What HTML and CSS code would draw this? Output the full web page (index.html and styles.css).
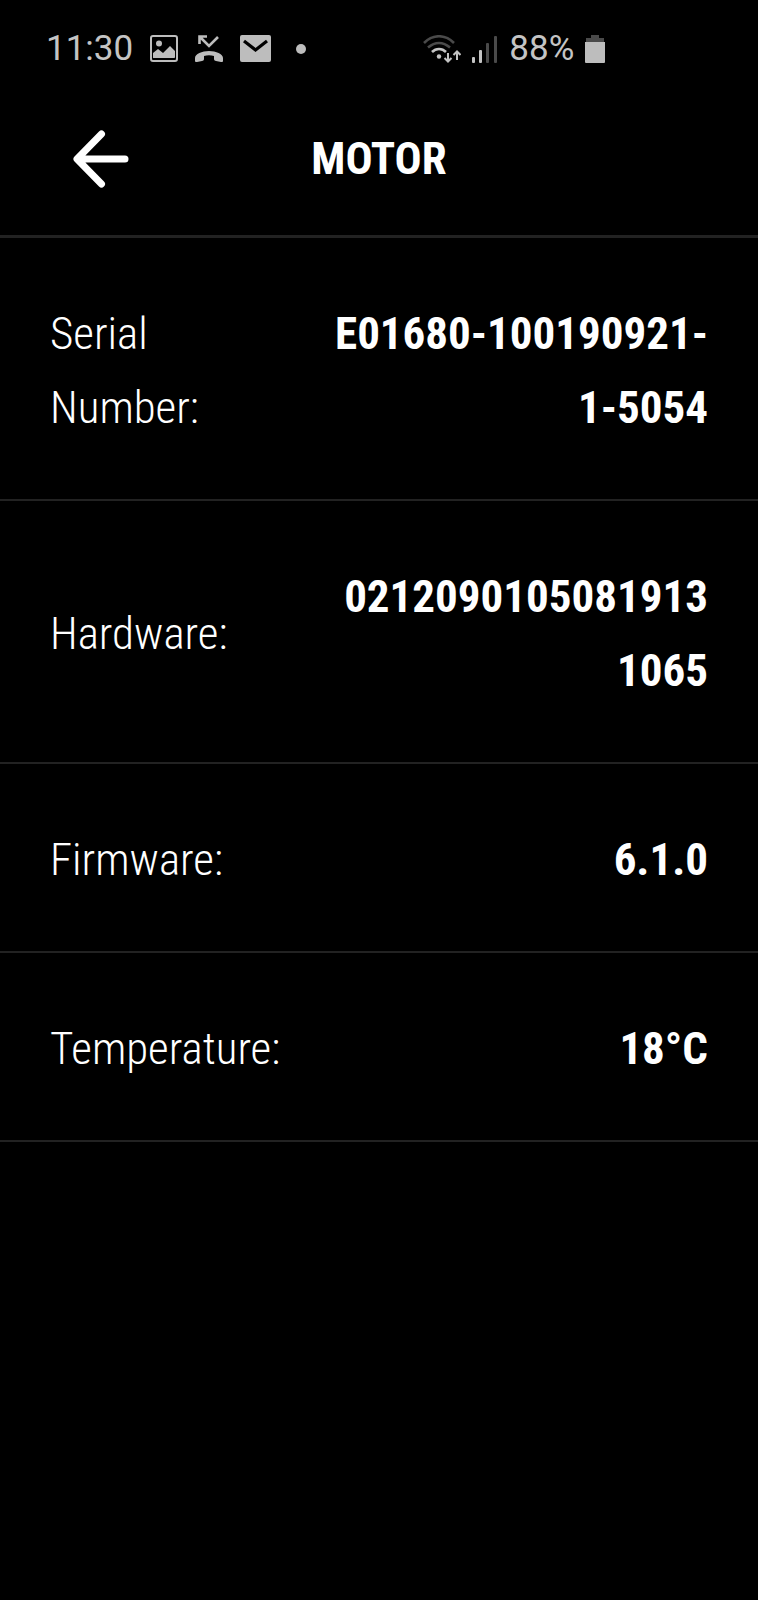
FILE: index.html
```
<!DOCTYPE html>
<html lang="en">
<head>
  <meta charset="UTF-8">
  <meta name="viewport" content="width=device-width, initial-scale=1.0">
  <title>Motor</title>
  <link rel="stylesheet" href="styles.css">
</head>
<body>
  <div class="status-bar">
    <div class="status-left">
      <time class="clock">11:30</time>
      <!-- picture -->
      <svg class="icon" width="28" height="28" viewBox="0 0 28 28">
        <rect x="1" y="1" width="26" height="25" rx="2" fill="none" stroke="#bdbdbd" stroke-width="2"/>
        <circle cx="9" cy="8.500" r="3" fill="#bdbdbd"/>
        <path d="M3 22v-4l5-4 5 4 7-7 5 5v6c0 1-1 1-1 1H4c-1 0-1 0-1-1z" fill="#bdbdbd"/>
      </svg>
      <!-- missed call -->
      <svg class="icon" width="28" height="28" viewBox="0 0 28 28">
        <path d="M4.500 9V1.500H12M5 2l9 9 9-9" fill="none" stroke="#bdbdbd" stroke-width="2.600"/>
        <path d="M0 26v-3c0-4 7-7 14-7s14 3 14 7v3c0 1-1 1-2 1l-5-1c-1 0-2-1-2-2v-3c-3-1-7-1-10 0v3c0 1-1 2-2 2l-5 1c-1 0-2 0-2-1z" fill="#bdbdbd"/>
      </svg>
      <!-- mail -->
      <svg class="icon" width="31" height="28" viewBox="0 0 31 28">
        <rect width="31" height="27" rx="2" fill="#bdbdbd"/>
        <path d="M4 6l11.500 9L27 6" fill="none" stroke="#000" stroke-width="3.200"/>
      </svg>
      <span class="dot"></span>
    </div>
    <div class="status-right">
      <!-- wifi -->
      <svg class="icon" width="38" height="28" viewBox="0 0 38 28">
        <g fill="none" stroke-width="2.600">
          <path d="M1 8C10-1 22-1 31 8" stroke="#4a4a4a"/>
          <path d="M5 12.500c7-6 15-6 22 0" stroke="#4a4a4a"/>
          <path d="M9 17c4-4 10-4 14 0" stroke="#c4c4c4"/>
          <path d="M25 18v8M21.500 23l3.500 3.500 3.500-3.500M34 25v-8M30.500 20l3.500-3.500 3.500 3.500" stroke="#c4c4c4" stroke-width="2"/>
        </g>
        <circle cx="16" cy="21.500" r="2.200" fill="#c4c4c4"/>
      </svg>
      <!-- signal -->
      <svg class="icon" width="26" height="28" viewBox="0 0 26 28">
        <g fill="#c4c4c4">
          <rect x="0" y="22" width="3" height="6" rx="1"/>
          <rect x="7" y="15" width="3" height="13" rx="1"/>
        </g>
        <g fill="#4a4a4a">
          <rect x="14" y="8" width="3" height="20" rx="1"/>
          <rect x="22" y="1" width="3" height="27" rx="1"/>
        </g>
      </svg>
      <span class="percent">88%</span>
      <!-- battery -->
      <svg class="icon" width="20" height="28" viewBox="0 0 20 28">
        <path d="M1 8V3h5V0h8v3h5v5z" fill="#4a4a4a"/>
        <path d="M0 7h20v20a1 1 0 0 1-1 1H1a1 1 0 0 1-1-1z" fill="#bdbdbd"/>
      </svg>
    </div>
  </div>

  <header class="header">
    <button class="back-btn" type="button" aria-label="Back">
      <svg width="56" height="58" viewBox="0 0 56 58">
        <path d="M28.500 4L4 29l24.500 25M5 29h47" fill="none" stroke="#fff" stroke-width="7" stroke-linecap="round" stroke-linejoin="round"/>
      </svg>
    </button>
    <h1 class="title">MOTOR</h1>
  </header>

  <dl class="info-list">
    <div class="info-row">
      <dt class="info-label">Serial Number:</dt>
      <dd class="info-value">E01680-100190921-1-5054</dd>
    </div>
    <div class="info-row">
      <dt class="info-label">Hardware:</dt>
      <dd class="info-value">02120901050819131065</dd>
    </div>
    <div class="info-row">
      <dt class="info-label">Firmware:</dt>
      <dd class="info-value">6.1.0</dd>
    </div>
    <div class="info-row">
      <dt class="info-label">Temperature:</dt>
      <dd class="info-value">18°C</dd>
    </div>
  </dl>
</body>
</html>
```
FILE: styles.css
```
* {
  box-sizing: border-box;
}
body {
  margin: 0;
  min-height: 100vh;
  background-color: #000;
  color: #fff;
  font-family: 'Roboto Condensed', 'Liberation Sans Narrow', Roboto, sans-serif;
}
.status-bar {
  display: grid;
  grid-template-columns: 53% 47%;
  align-items: center;
  height: 82px;
  padding: 16px 0 0 46px;
  color: #c4c4c4;
  font-family: Roboto, sans-serif;
  font-size: 35px;
  line-height: 40px;
}
.status-left, .status-right {
  display: flex;
  align-items: center;
}
.status-left {
  gap: 17px;
}
.status-right {
  gap: 11px;
}
.icon {
  display: block;
  flex: none;
}
.dot {
  width: 10px;
  height: 10px;
  margin-left: 8px;
  border-radius: 50%;
  background-color: #bdbdbd;
}
.header {
  display: grid;
  grid-template-columns: 1fr auto 1fr;
  align-items: center;
  height: 156px;
  padding: 0 73px;
  border-bottom: 3px solid #222;
}
.back-btn {
  justify-self: start;
  padding: 0;
  border: none;
  background: none;
  cursor: pointer;
}
.back-btn svg {
  display: block;
}
.title {
  margin: 0;
  font-size: 45px;
  line-height: 74px;
  font-weight: bold;
}
.info-list {
  margin: 0;
}
.info-row {
  display: flex;
  align-items: center;
  justify-content: space-between;
  padding: 59px 50px 54px;
  border-bottom: 2px solid #222;
  font-size: 45px;
  line-height: 74px;
}
.info-label {
  flex: 0 0 36%;
  font-weight: 300;
}
.info-value {
  flex: 0 0 58%;
  margin: 0;
  font-weight: bold;
  text-align: right;
  overflow-wrap: anywhere;
}
```
